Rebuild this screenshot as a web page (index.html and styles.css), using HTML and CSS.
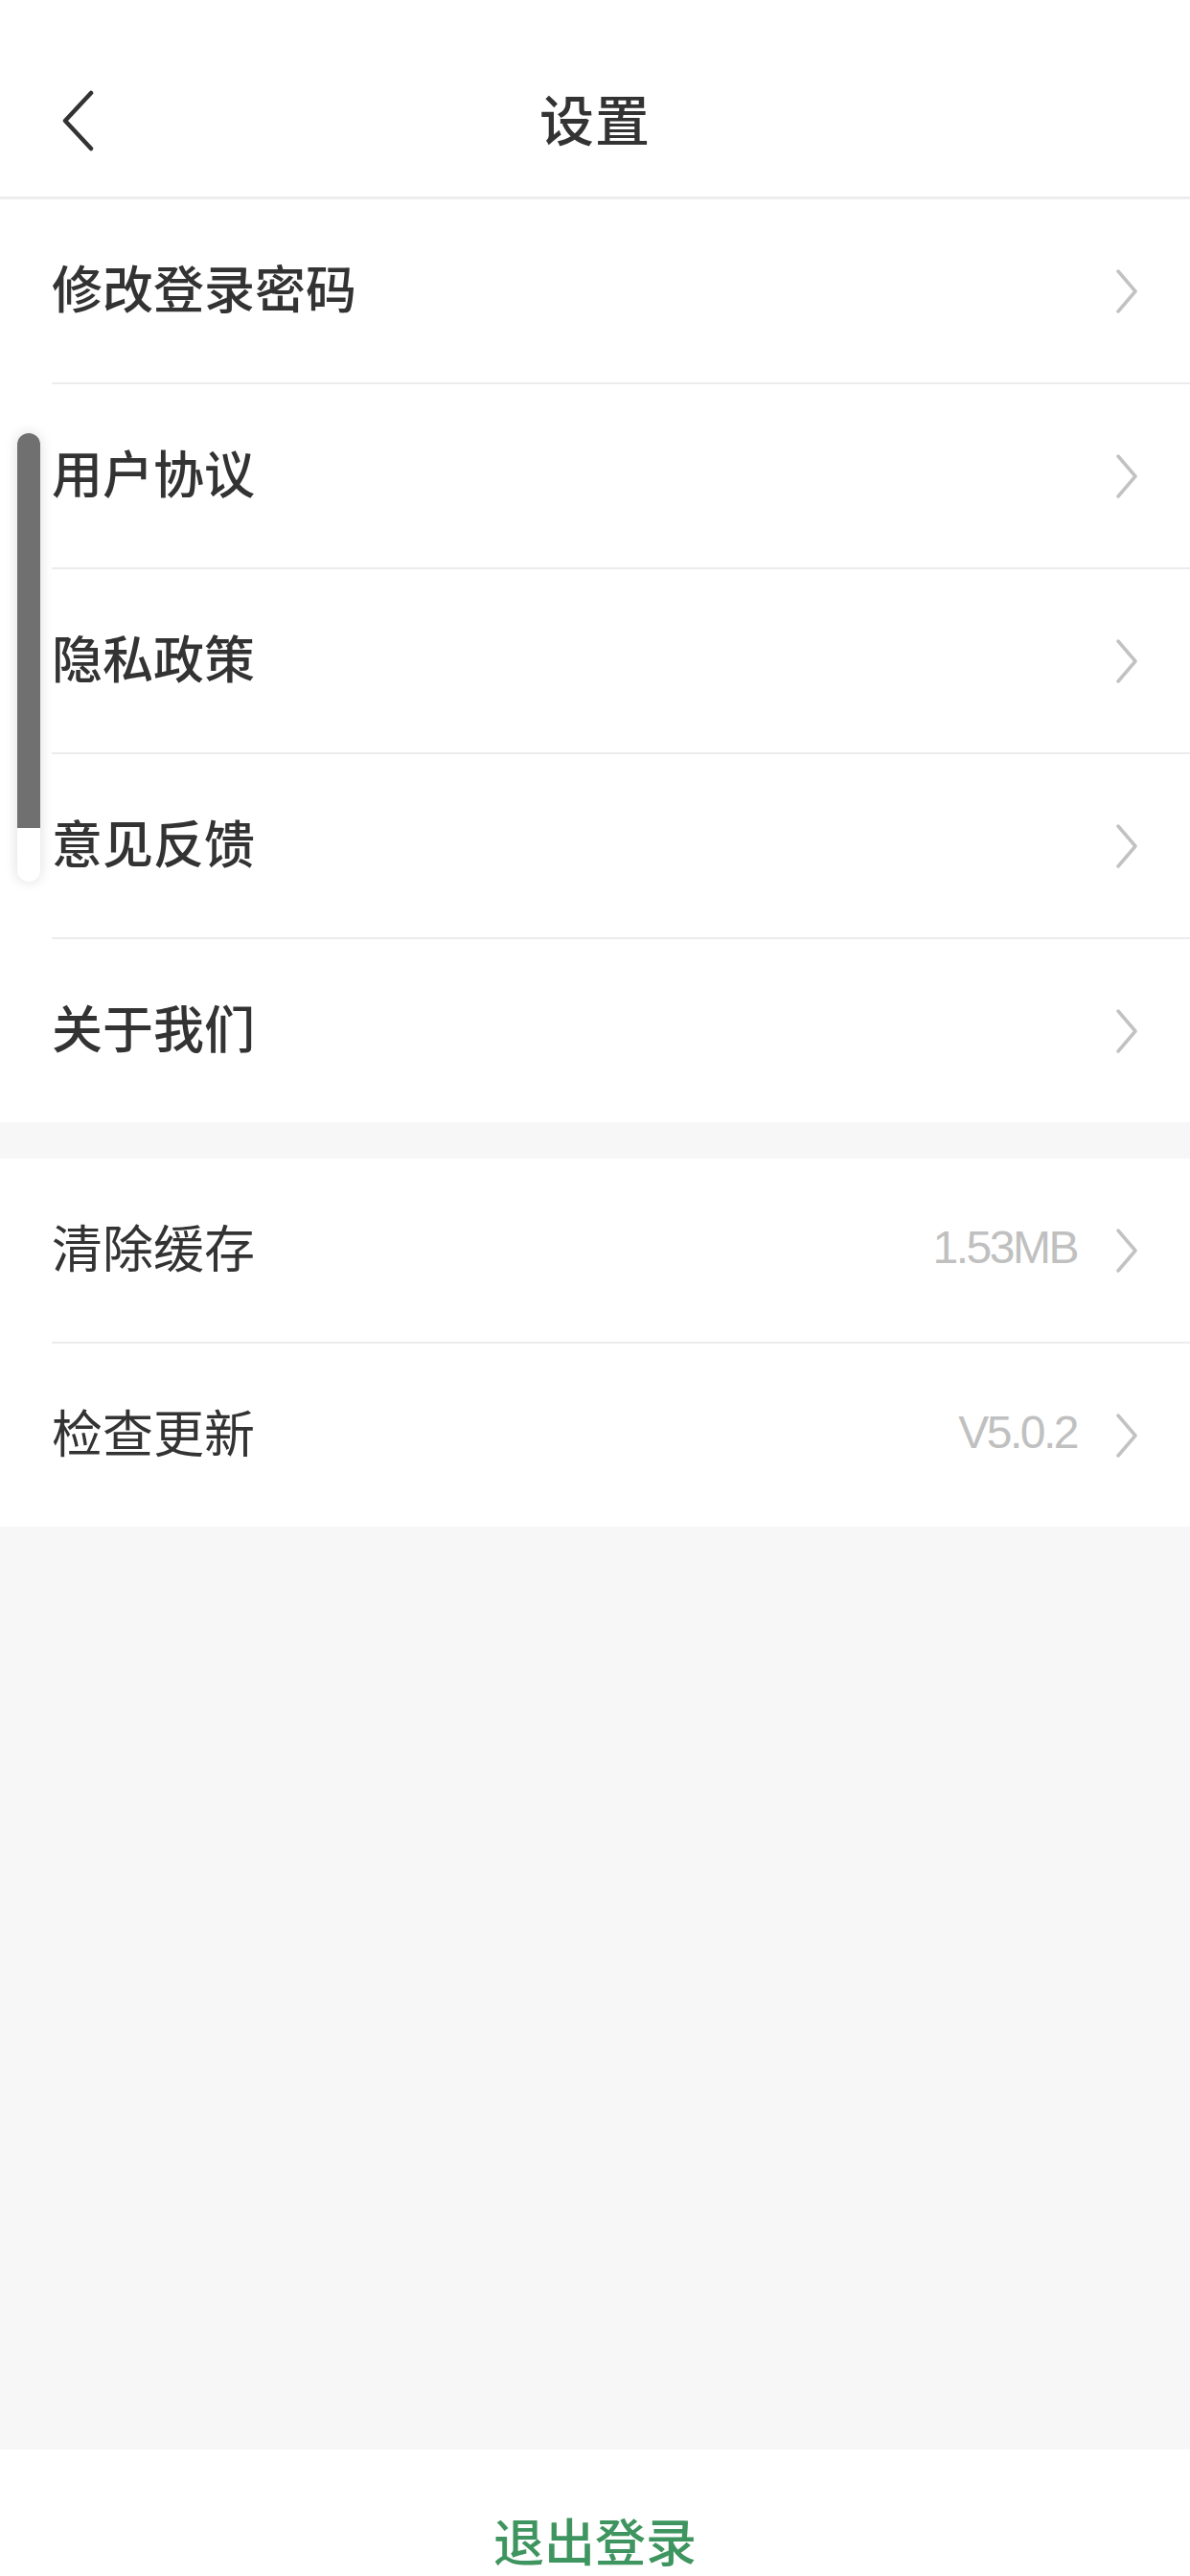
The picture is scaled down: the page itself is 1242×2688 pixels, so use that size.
FILE: index.html
```html
<!DOCTYPE html>
<html lang="zh-CN">
<head>
<meta charset="utf-8">
<title>设置</title>
<link rel="stylesheet" href="styles.css">
</head>
<body>
<div class="page">
  <header class="header">
    <div class="navbar">
      <button class="back" aria-label="返回">
        <svg width="36" height="64" viewBox="0 0 36 64"><path d="M31 3 L4 32 L31 61" fill="none" stroke="#333" stroke-width="4.5" stroke-linecap="round" stroke-linejoin="round"/></svg>
      </button>
      <h1 class="title">设置</h1>
    </div>
  </header>

  <main class="content">
    <section class="group">
      <div class="row"><span class="label">修改登录密码</span><span class="right"><svg class="chev" width="24" height="46" viewBox="0 0 24 46"><path d="M3 2 L21 23 L3 44" fill="none" stroke="#c2c2c2" stroke-width="3.5" stroke-linecap="round" stroke-linejoin="round"/></svg></span></div>
      <div class="row"><span class="label">用户协议</span><span class="right"><svg class="chev" width="24" height="46" viewBox="0 0 24 46"><path d="M3 2 L21 23 L3 44" fill="none" stroke="#c2c2c2" stroke-width="3.5" stroke-linecap="round" stroke-linejoin="round"/></svg></span></div>
      <div class="row"><span class="label">隐私政策</span><span class="right"><svg class="chev" width="24" height="46" viewBox="0 0 24 46"><path d="M3 2 L21 23 L3 44" fill="none" stroke="#c2c2c2" stroke-width="3.5" stroke-linecap="round" stroke-linejoin="round"/></svg></span></div>
      <div class="row"><span class="label">意见反馈</span><span class="right"><svg class="chev" width="24" height="46" viewBox="0 0 24 46"><path d="M3 2 L21 23 L3 44" fill="none" stroke="#c2c2c2" stroke-width="3.5" stroke-linecap="round" stroke-linejoin="round"/></svg></span></div>
      <div class="row"><span class="label">关于我们</span><span class="right"><svg class="chev" width="24" height="46" viewBox="0 0 24 46"><path d="M3 2 L21 23 L3 44" fill="none" stroke="#c2c2c2" stroke-width="3.5" stroke-linecap="round" stroke-linejoin="round"/></svg></span></div>
    </section>

    <section class="group">
      <div class="row"><span class="label light">清除缓存</span><span class="right"><span class="value">1.53MB</span><svg class="chev" width="24" height="46" viewBox="0 0 24 46"><path d="M3 2 L21 23 L3 44" fill="none" stroke="#c2c2c2" stroke-width="3.5" stroke-linecap="round" stroke-linejoin="round"/></svg></span></div>
      <div class="row"><span class="label light">检查更新</span><span class="right"><span class="value">V5.0.2</span><svg class="chev" width="24" height="46" viewBox="0 0 24 46"><path d="M3 2 L21 23 L3 44" fill="none" stroke="#c2c2c2" stroke-width="3.5" stroke-linecap="round" stroke-linejoin="round"/></svg></span></div>
    </section>
  </main>

  <footer class="footer">
    <button class="logout">退出登录</button>
  </footer>

  <div class="scroll-indicator"><div class="thumb"></div></div>
</div>
</body>
</html>
```

FILE: styles.css
```css
* { box-sizing: border-box; }
html, body { margin: 0; padding: 0; }
body {
  background: #f7f7f7;
  font-family: "Noto Sans CJK SC", "Noto Sans", sans-serif;
  color: #333;
}
.page {
  position: relative;
  width: 1242px;
  height: 2688px;
  display: flex;
  flex-direction: column;
}
.header {
  background: #fff;
  height: 208px;
  padding-top: 90px;
  border-bottom: 3px solid #ededed;
}
.navbar {
  position: relative;
  height: 70px;
  display: flex;
  align-items: center;
  justify-content: center;
}
.back {
  position: absolute;
  left: 64px;
  top: 4px;
  border: 0;
  background: none;
  padding: 0;
  width: 36px;
  height: 64px;
}
.back svg { display: block; }
.title {
  margin: 0;
  padding-bottom: 6px;
  font-size: 57px;
  font-weight: 500;
  line-height: 70px;
  color: #333;
  letter-spacing: 1px;
}
.content {
  flex: 1;
  display: flex;
  flex-direction: column;
  gap: 38px;
}
.group {
  background: #fff;
  padding-left: 54px;
}
.row {
  height: 193px;
  display: flex;
  align-items: center;
  justify-content: space-between;
  padding-right: 54px;
  border-bottom: 2px solid #ececec;
}
.row:last-child { border-bottom: 0; height: 191px; }
.label {
  font-size: 53px;
  font-weight: 500;
  color: #333;
  padding-bottom: 9px;
}
.label.light { font-weight: 400; }
.right {
  display: flex;
  align-items: center;
  gap: 40px;
}
.value {
  font-family: "Liberation Sans", "Noto Sans", sans-serif;
  font-size: 48px;
  color: #c0c0c0;
  letter-spacing: -2.5px;
  padding-bottom: 6px;
}
.chev { display: block; }
.footer {
  background: #fff;
  height: 132px;
  display: flex;
  align-items: flex-end;
  justify-content: center;
  padding-bottom: 0;
}
.logout {
  border: 0;
  background: none;
  padding: 0;
  font-family: "Noto Sans CJK SC", sans-serif;
  font-size: 53px;
  font-weight: 500;
  color: #3f955f;
  line-height: 76px;
}
.scroll-indicator {
  position: absolute;
  left: 18px;
  top: 452px;
  width: 24px;
  height: 468px;
  border-radius: 12px;
  background: #fff;
  box-shadow: 0 0 14px rgba(0, 0, 0, 0.14);
  overflow: hidden;
}
.thumb {
  height: 412px;
  background: #707070;
}
```
